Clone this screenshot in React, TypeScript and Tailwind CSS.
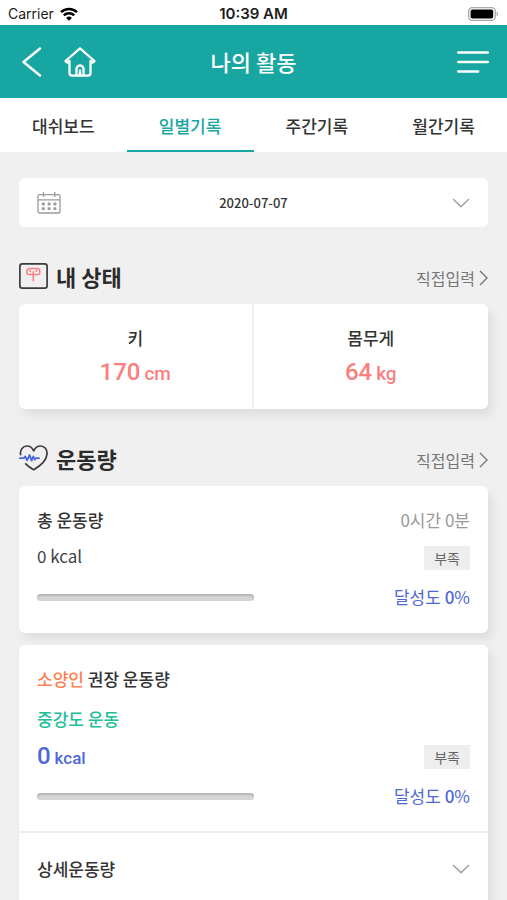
import { useState } from 'react';

interface Tab {
  id: string;
  label: string;
}

interface Stat {
  label: string;
  value: number;
  unit: string;
}

const tabs: Tab[] = [
  { id: 'dashboard', label: '대쉬보드' },
  { id: 'daily', label: '일별기록' },
  { id: 'weekly', label: '주간기록' },
  { id: 'monthly', label: '월간기록' },
];

const stats: Stat[] = [
  { label: '키', value: 170, unit: 'cm' },
  { label: '몸무게', value: 64, unit: 'kg' },
];

function StatusBar() {
  return (
    <div className="grid h-[25px] shrink-0 grid-cols-3 items-center bg-white px-2 pt-0.5 font-['Inter',sans-serif] text-[#1c1c1c]">
      <div className="flex items-center gap-1.5">
        <span className="text-sm">Carrier</span>
        <svg className="h-[14px] w-[18px]" viewBox="0 0 18 14" fill="none" stroke="#000" strokeWidth="2.5">
          <path d="M1 5.2a11.4 11.4 0 0 1 16 0" />
          <path d="M3.8 8.4a7.4 7.4 0 0 1 10.4 0" />
          <path d="M9 13.8 6.1 10.9a4.2 4.2 0 0 1 5.8 0z" fill="#000" stroke="none" />
        </svg>
      </div>
      <span className="text-center text-[15px] leading-5 font-semibold whitespace-nowrap">10:39 AM</span>
      <svg className="h-[14px] w-[31px] justify-self-end" viewBox="0 0 31 14">
        <rect x="0.7" y="0.7" width="26.6" height="12.6" rx="3.6" fill="#fff" stroke="#a9a9a9" strokeWidth="1.3" />
        <rect x="2.6" y="2.4" width="22.6" height="9.2" rx="1.8" fill="#000" />
        <path d="M28.6 4.6c1.9.7 1.9 4.1 0 4.8z" fill="#a9a9a9" />
      </svg>
    </div>
  );
}

function ChevronDown() {
  return (
    <svg className="h-[10px] w-[18px]" viewBox="0 0 18 10" fill="none" stroke="#a3a3a3" strokeWidth="1.5">
      <path d="M1 1l8 7.6L17 1" />
    </svg>
  );
}

function CalendarIcon() {
  return (
    <svg className="h-[22px] w-6" viewBox="0 0 24 22" fill="none" stroke="#9b9b9b" strokeWidth="1.3">
      <rect x="1" y="2.6" width="22" height="18.4" rx="1.6" />
      <path d="M1 7.8h22M6.5 0v5M17.8 0v5" />
      <g fill="#9b9b9b" stroke="none">
        <rect x="4.8" y="10.6" width="3" height="2.8" rx="0.6" />
        <rect x="10.6" y="10.6" width="3" height="2.8" rx="0.6" />
        <rect x="16.4" y="10.6" width="3" height="2.8" rx="0.6" />
        <rect x="4.8" y="15.2" width="3" height="2.8" rx="0.6" />
        <rect x="10.6" y="15.2" width="3" height="2.8" rx="0.6" />
        <rect x="16.4" y="15.2" width="3" height="2.8" rx="0.6" />
      </g>
    </svg>
  );
}

function ScaleIcon() {
  return (
    <svg className="h-[26px] w-[29px]" viewBox="0 0 29 26" fill="none">
      <rect x="0.9" y="0.9" width="27.2" height="24.2" rx="2.4" stroke="#3c3c3c" strokeWidth="1.7" />
      <g stroke="#fb7f7f" strokeWidth="1.5" strokeLinecap="round">
        <path d="M9.4 11.6h9.800a1.800 1.800 0 0 0 1.600-1.800V8a2.600 2.600 0 0 0-2.600-2.600h-7.800A2.600 2.600 0 0 0 7.800 8v1.800a1.800 1.800 0 0 0 1.600 1.800z" />
        <path d="M14.300 8.800V17.800M11.200 7.200v1.200M17.400 7.200v1.200" />
      </g>
    </svg>
  );
}

function HeartIcon() {
  return (
    <svg className="h-[26px] w-[29px]" viewBox="0 0 29 26" fill="none" strokeLinecap="round" strokeLinejoin="round">
      <path
        d="M1.600 9.600C.8 4.600 4 1 8 1c2.900 0 5.200 1.700 6.700 4.800C16.200 2.700 18.600 1 21.400 1c4 0 7.100 3.400 6.600 8.200-.6 6.200-6.400 11.600-13.300 15.600-2.900-1.700-5.700-3.700-8-6"
        stroke="#3c3c3c"
        strokeWidth="1.7"
      />
      <path
        d="M.8 13.200h4l1.400-1.800 1.900 4 2.500-5.400 2 5.600 1.700-4.200 1.500 3.200 1.200-1.400h3"
        stroke="#4a68dd"
        strokeWidth="1.800"
      />
    </svg>
  );
}

function SectionTitle({ icon, title }: { icon: React.ReactNode; title: string }) {
  return (
    <div className="flex items-center justify-between">
      <div className="flex items-center gap-2">
        {icon}
        <h2 className="text-[22px] leading-8 font-bold text-[#2b2b2b]">{title}</h2>
      </div>
      <a href="#" className="flex items-center gap-1 pt-1 text-base text-[#777]">
        직접입력
        <svg className="h-4 w-[9px]" viewBox="0 0 9 16" fill="none" stroke="#777" strokeWidth="1.4">
          <path d="M1 1l7 7-7 7" />
        </svg>
      </a>
    </div>
  );
}

function Achievement({ percent }: { percent: number }) {
  return (
    <div className="mt-[11px] flex items-center justify-between">
      <div
        role="progressbar"
        aria-label="달성도"
        aria-valuenow={percent}
        className="h-[7px] w-1/2 overflow-hidden rounded-full bg-[#d5d5d5] shadow-[inset_0_2px_2px_#b5b5b5]"
      >
        <div className="h-full bg-[#4a68dd]" style={{ width: `${percent}%` }} />
      </div>
      <p className="text-[17px] leading-6 text-[#4f67d8]">
        달성도 <span className="font-medium">{percent}</span>%
      </p>
    </div>
  );
}

function Badge({ children }: { children: React.ReactNode }) {
  return <span className="bg-[#eee] px-2.5 text-sm leading-6 text-[#666]">{children}</span>;
}

export default function App() {
  const [activeTab, setActiveTab] = useState('daily');
  const [detailOpen, setDetailOpen] = useState(false);

  return (
    <div className="flex h-screen flex-col bg-[#f0f0f0] font-['Noto_Sans_CJK_KR',sans-serif] text-[#333]">
      <StatusBar />

      <header className="grid h-[73px] shrink-0 grid-cols-3 items-center bg-[#17a6a1] px-[18px] text-white">
        <div className="flex items-center gap-[22px]">
          <button type="button" aria-label="뒤로" className="pl-1">
            <svg className="h-[30px] w-5" viewBox="0 0 20 30" fill="none" stroke="currentColor" strokeWidth="2.4" strokeLinecap="round" strokeLinejoin="round">
              <path d="M18 1.5 1.5 15 18 28.5" />
            </svg>
          </button>
          <button type="button" aria-label="홈">
            <svg className="h-[30px] w-8" viewBox="0 0 32 30" fill="none" stroke="currentColor" strokeWidth="2.3" strokeLinecap="round" strokeLinejoin="round">
              <path d="M5.5 14v12a2.6 2.6 0 0 0 2.6 2.6h15.8a2.6 2.6 0 0 0 2.6-2.6V14l2.4 1.6 1.6-1.600L16 1.400 1.500 14l1.600 1.600z" />
              <path d="M12.500 28v-6a3.500 3.500 0 0 1 7 0v6M16 23.500V28" />
            </svg>
          </button>
        </div>
        <h1 className="text-center text-[22px] font-medium whitespace-nowrap">나의 활동</h1>
        <button type="button" aria-label="메뉴" className="justify-self-end">
          <svg className="h-6 w-8" viewBox="0 0 32 24" stroke="currentColor" strokeWidth="2.4" strokeLinecap="round">
            <path d="M1.2 2.500h29.600M1.200 12h29.600M1.200 21.500h20" />
          </svg>
        </button>
      </header>

      <nav className="grid h-[54px] shrink-0 grid-cols-4 bg-white">
        {tabs.map((tab) => (
          <button
            key={tab.id}
            type="button"
            onClick={() => setActiveTab(tab.id)}
            className={
              activeTab === tab.id
                ? 'border-b-2 border-[#17a6a1] pt-1 text-[17px] font-medium text-[#17a6a1]'
                : 'border-b-2 border-transparent pt-1 text-[17px] font-medium text-[#333]'
            }
          >
            {tab.label}
          </button>
        ))}
      </nav>

      <main className="min-h-0 flex-1 overflow-y-auto px-[19px] pt-[26px] [scrollbar-width:none]">
        <button type="button" className="grid h-[49px] w-full grid-cols-3 items-center rounded-md bg-white px-[18px]">
          <CalendarIcon />
          <span className="text-[13px] font-medium">2020-07-07</span>
          <span className="justify-self-end">
            <ChevronDown />
          </span>
        </button>

        <section className="mt-[33px]">
          <SectionTitle icon={<ScaleIcon />} title="내 상태" />
          <div className="mt-3 grid grid-cols-2 divide-x-2 divide-[#f0f0f0] rounded-md bg-white shadow-[4px_6px_10px_rgba(0,0,0,0.08)]">
            {stats.map((stat) => (
              <div key={stat.label} className="flex h-[105px] flex-col items-center justify-center gap-1">
                <p className="text-[17px] leading-7 font-medium">{stat.label}</p>
                <p className="font-['Roboto',sans-serif] text-2xl leading-8 font-medium text-[#fb7f7f]">
                  {stat.value} <span className="-ml-0.5 text-[19px]">{stat.unit}</span>
                </p>
              </div>
            ))}
          </div>
        </section>

        <section className="mt-[33px]">
          <SectionTitle icon={<HeartIcon />} title="운동량" />

          <div className="mt-3 h-[147px] rounded-md bg-white px-[18px] pt-5 shadow-[4px_6px_10px_rgba(0,0,0,0.08)]">
            <div className="flex items-center justify-between">
              <h3 className="text-[17px] leading-7 font-medium">총 운동량</h3>
              <p className="text-[17px] leading-7 text-[#999]">0시간 0분</p>
            </div>
            <div className="mt-2 flex h-8 items-center justify-between">
              <p className="self-start text-[17px] leading-7 text-[#444]">0 kcal</p>
              <Badge>부족</Badge>
            </div>
            <Achievement percent={0} />
          </div>

          <div className="mt-3 rounded-md bg-white shadow-[4px_6px_10px_rgba(0,0,0,0.08)]">
            <div className="h-[188px] border-b-2 border-[#eee] px-[18px] pt-5">
              <h3 className="text-[17px] leading-7 font-medium">
                <span className="text-[#ff8150]">소양인</span> 권장 운동량
              </h3>
              <p className="mt-3 text-[17px] leading-7 font-medium text-[#20bf96]">중강도 운동</p>
              <div className="mt-2 flex h-8 items-center justify-between">
                <p className="font-['Roboto',sans-serif] text-2xl leading-8 font-medium text-[#4f67d8]">
                  0 <span className="-ml-0.5 text-[17px]">kcal</span>
                </p>
                <Badge>부족</Badge>
              </div>
              <Achievement percent={0} />
            </div>
            <button
              type="button"
              aria-expanded={detailOpen}
              onClick={() => setDetailOpen(!detailOpen)}
              className="flex h-[72px] w-full items-center justify-between px-[18px] text-[17px] font-medium"
            >
              상세운동량
              <ChevronDown />
            </button>
          </div>
        </section>
      </main>
    </div>
  );
}
